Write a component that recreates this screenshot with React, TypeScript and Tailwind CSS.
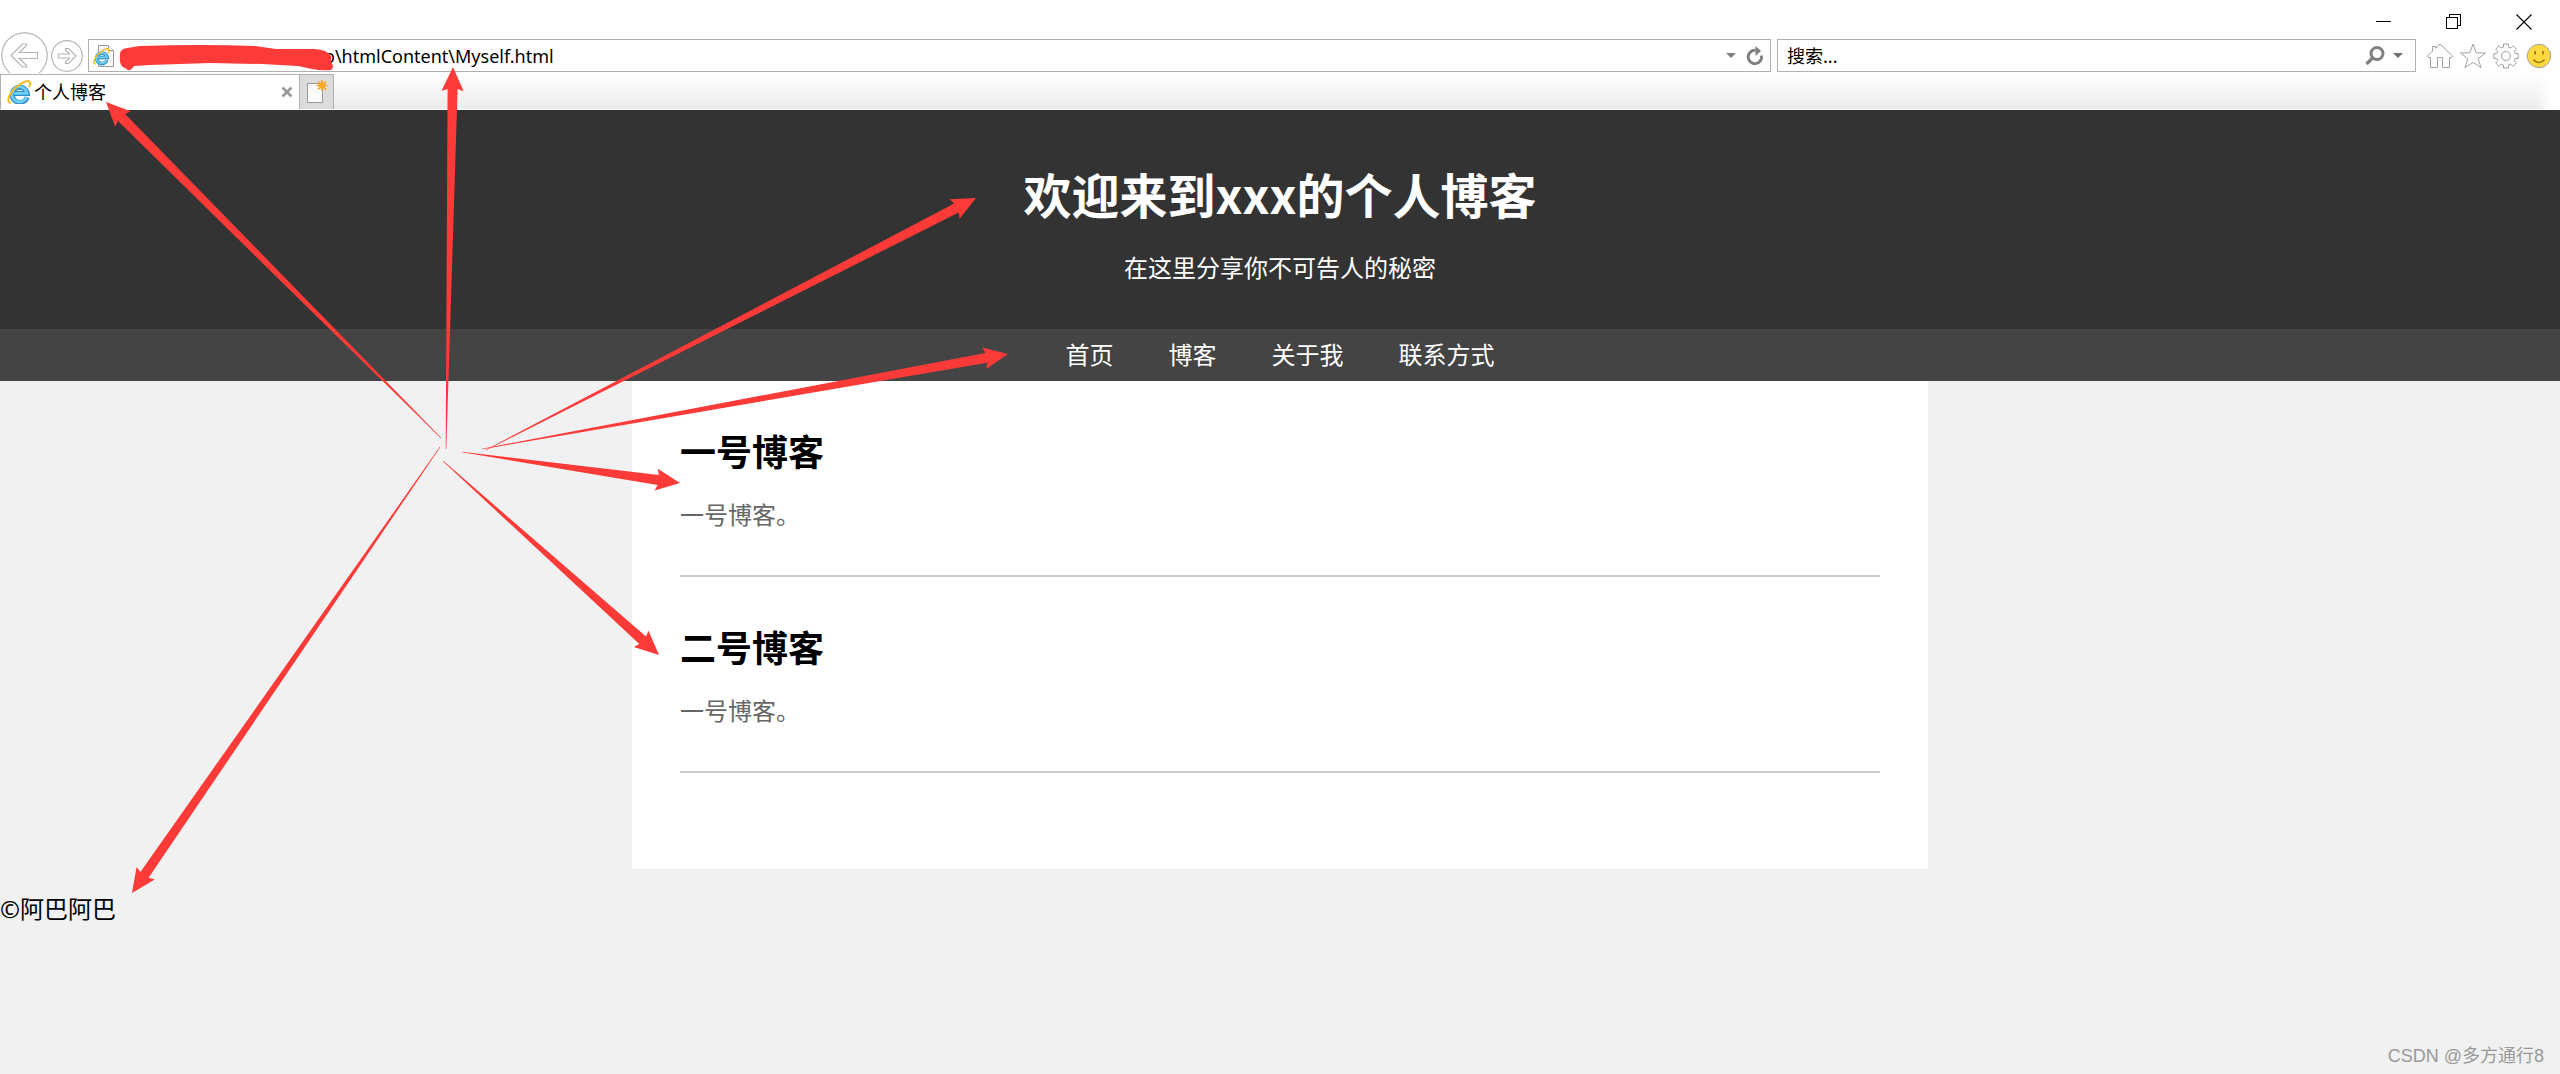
import type { ReactNode } from 'react'

const navItems = ['首页', '博客', '关于我', '联系方式']

const posts = [
  { title: '一号博客', body: '一号博客。' },
  { title: '二号博客', body: '一号博客。' },
]

// 标注箭头:从 tail 到 tip
const arrows = [
  { tail: [441, 438], tip: [106, 102] },
  { tail: [446, 449], tip: [453, 67] },
  { tail: [486, 450], tip: [976, 198] },
  { tail: [482, 449], tip: [1008, 354] },
  { tail: [462, 452], tip: [680, 483] },
  { tail: [443, 461], tip: [659, 655] },
  { tail: [440, 447], tip: [132, 893] },
]

function arrowPoints([x0, y0]: number[], [x1, y1]: number[]): string {
  const len = Math.hypot(x1 - x0, y1 - y0)
  const ux = (x1 - x0) / len
  const uy = (y1 - y0) / len
  const at = (back: number, side: number) =>
    `${(x1 - ux * back - uy * side).toFixed(1)},${(y1 - uy * back + ux * side).toFixed(1)}`
  return [at(0, 0), at(24, 11), at(22, 5), at(len, 0.3), at(len, -0.3), at(22, -5), at(24, -11)].join(' ')
}

function IeMark() {
  return (
    <>
      <path d="M20 17.2A7.6 7.6 0 1 1 20.3 13.6H7" fill="none" stroke="#2b8fc9" strokeWidth="5" />
      <path d="M19.4 17.4A7.6 7.6 0 1 1 20 13.4H7" fill="none" stroke="#6fd0f4" strokeWidth="2.8" />
      <path
        d="M4 22.8C-1 22.6 1.2 14.5 8.6 7.8 15 2 21.6-.6 22.8 2.4c.5 1.3 0 3-1 4.8"
        fill="none"
        stroke="#f7bd22"
        strokeWidth="2"
      />
    </>
  )
}

function IeLogo() {
  return (
    <svg viewBox="0 0 24 24" className="h-6 w-6 shrink-0" aria-hidden="true">
      <IeMark />
    </svg>
  )
}

function PageIcon() {
  return (
    <svg viewBox="0 0 22 22" className="h-[22px] w-[22px] shrink-0" aria-hidden="true">
      <path d="M5.5.5h10l5 5v16h-15z" fill="#f7f7f7" stroke="#9a9a9a" />
      <path d="M15.5.5v5h5" fill="#fff" stroke="#9a9a9a" />
      <g transform="translate(0 3) scale(.7)">
        <IeMark />
      </g>
    </svg>
  )
}

function IconButton({ label, className, children }: { label: string; className?: string; children: ReactNode }) {
  return (
    <button type="button" aria-label={label} className={`shrink-0 ${className ?? ''}`}>
      {children}
    </button>
  )
}

function TitleBar() {
  return (
    <div className="flex h-[39px] items-center justify-end gap-[54px] pt-1 pr-7">
      <IconButton label="最小化">
        <svg viewBox="0 0 16 16" className="h-4 w-4" shapeRendering="crispEdges">
          <path d="M0 7.5h15" stroke="#000" />
        </svg>
      </IconButton>
      <IconButton label="还原">
        <svg viewBox="0 0 16 16" className="h-4 w-4" fill="none" stroke="#000" shapeRendering="crispEdges">
          <path d="M.5 3.5h11v11H.5zM3.5 3.5v-3h11v11h-3" />
        </svg>
      </IconButton>
      <IconButton label="关闭">
        <svg viewBox="0 0 16 16" className="h-4 w-4">
          <path d="M.5.5l15 15M15.5.5l-15 15" stroke="#000" strokeWidth="1.1" />
        </svg>
      </IconButton>
    </div>
  )
}

function AddressRow() {
  return (
    <div className="flex h-[34px] items-start pr-2">
      <div className="flex w-[88px] shrink-0 items-center gap-[3px] pl-px">
        <IconButton label="后退" className="h-[34px] w-[47px]">
          <svg viewBox="0 0 47 41" className="-mt-2 h-[41px] w-[47px]" fill="#fff" stroke="#b4b4b4" strokeWidth="1.2">
            <circle cx="23.5" cy="23.5" r="22.7" />
            <path d="M10 23.5L21.5 12h4v1.5l-7 7h18v6h-18l7 7V35h-4z" />
          </svg>
        </IconButton>
        <IconButton label="前进">
          <svg viewBox="0 0 32 32" className="h-8 w-8" fill="#fff" stroke="#b4b4b4" strokeWidth="1.2">
            <circle cx="16" cy="16" r="15.3" />
            <path d="M25 16l-7.5-7.5h-3V10l4 4h-11v4h11l-4 4v1.5h3z" />
          </svg>
        </IconButton>
      </div>
      <div className="flex h-[33px] flex-1 items-center border border-[#b0b0b0] bg-white pr-1.5 pl-1">
        <PageIcon />
        <input
          aria-label="地址"
          defaultValue="o\htmlContent\Myself.html"
          className="h-full min-w-0 flex-1 pl-[209px] text-[18px] text-black outline-none"
        />
        <IconButton label="显示地址列表" className="mr-2.5">
          <svg viewBox="0 0 10 5" className="h-[5px] w-2.5">
            <path d="M0 0h10L5 5z" fill="#808080" />
          </svg>
        </IconButton>
        <IconButton label="刷新">
          <svg viewBox="0 0 18 20" className="h-5 w-[18px]">
            <path d="M15.4 9.5A6.7 6.7 0 1 1 9.5 4.3" fill="none" stroke="#808080" strokeWidth="3" />
            <path d="M9.5 0l5.5 5-5.5 5z" fill="#808080" />
          </svg>
        </IconButton>
      </div>
      <div className="ml-1.5 flex h-[33px] w-[639px] items-center border border-[#b0b0b0] bg-white pr-3 pl-[9px]">
        <input
          aria-label="搜索"
          placeholder="搜索..."
          className="h-full min-w-0 flex-1 text-[18px] outline-none placeholder:text-black"
        />
        <IconButton label="执行搜索" className="mr-2">
          <svg viewBox="0 0 20 20" className="h-5 w-5" fill="none" stroke="#808080">
            <circle cx="12" cy="7.5" r="6" strokeWidth="3" />
            <path d="M8 11.5L1.5 18" strokeWidth="3.4" />
          </svg>
        </IconButton>
        <IconButton label="搜索选项">
          <svg viewBox="0 0 10 5" className="h-[5px] w-2.5">
            <path d="M0 0h10L5 5z" fill="#707070" />
          </svg>
        </IconButton>
      </div>
      <div className="ml-[11px] flex h-[34px] items-center gap-[7px]">
        <IconButton label="主页">
          <svg viewBox="0 0 26 26" className="h-[26px] w-[26px]" fill="#fff" stroke="#a0a0a0" strokeLinejoin="round">
            <path d="M13 1l12.5 12-1 1.5h-2v10h-7v-10h-5v10h-7v-10h-2l-1-1.5 5-5V3.5h3v1.8z" />
          </svg>
        </IconButton>
        <IconButton label="收藏夹">
          <svg viewBox="0 0 26 26" className="h-[26px] w-[26px]" fill="#fff" stroke="#a0a0a0" strokeLinejoin="round">
            <path d="M13 1l3.2 8.8 9.3.2-7.4 5.7 2.9 9-8-5.3-8 5.3 2.9-9L.5 10l9.3-.2z" />
          </svg>
        </IconButton>
        <IconButton label="工具">
          <svg viewBox="0 0 26 26" className="h-[26px] w-[26px]" fill="#fff" stroke="#a0a0a0" strokeLinejoin="round">
            <path d="M10.5 1h5v3l2.3 1L20 2.8l3.3 3.4-2.1 2.1 1 2.2h3v5h-3l-1 2.2 2.1 2.2-3.3 3.4-2.2-2.2-2.3 1V25h-5v-2.9l-2.3-1L6 23.300l-3.300-3.400 2.100-2.200-1-2.200h-3v-5h3l1-2.200-2.100-2.100L6 2.800 8.200 5l2.300-1z" />
            <circle cx="13" cy="13" r="4.5" />
          </svg>
        </IconButton>
        <IconButton label="反馈">
          <svg viewBox="0 0 26 26" className="h-[26px] w-[26px]">
            <circle cx="13" cy="13" r="11.7" fill="#ffd93f" stroke="#a0a0a0" />
            <path d="M9 8v3.5M17 8v3.5" stroke="#9a7d10" strokeWidth="1.8" />
            <path d="M7.5 16.5c3 4 8 4 11 0" fill="none" stroke="#9a7d10" strokeWidth="1.5" />
          </svg>
        </IconButton>
      </div>
    </div>
  )
}

function TabStrip() {
  return (
    <div className="mt-px flex h-9 border-b border-white bg-linear-to-b from-white to-[#ebebeb]">
      <div className="flex w-[300px] items-center border border-b-0 border-[#b0b0b0] bg-white px-1.5">
        <IeLogo />
        <span className="ml-[3px] flex-1 text-[18px] leading-6 text-black">个人博客</span>
        <IconButton label="关闭选项卡">
          <svg viewBox="0 0 12 12" className="h-3 w-3">
            <path d="M1.5 1.5l9 9M10.5 1.5l-9 9" stroke="#999" strokeWidth="2.6" />
          </svg>
        </IconButton>
      </div>
      <IconButton
        label="新建选项卡"
        className="flex w-[34px] items-center justify-center border-t border-r border-[#b0b0b0] bg-[#dcdcdc]"
      >
        <svg viewBox="0 0 22 24" className="h-6 w-[22px]">
          <path d="M1.5 3.5h15v19h-15z" fill="#fafafa" stroke="#999" />
          <path d="M16 0v11M10.5 5.5h11M12 1.5l8 8M20 1.5l-8 8" stroke="#f5a31a" strokeWidth="1.6" />
          <circle cx="16" cy="5.5" r="3.2" fill="#f9a825" />
        </svg>
      </IconButton>
      <div className="flex-1" />
      <div className="w-6 bg-linear-to-r from-white/0 to-white to-60%" />
    </div>
  )
}

function Annotations() {
  return (
    <svg viewBox="0 0 2560 1074" className="pointer-events-none absolute top-0 left-0 w-full" aria-hidden="true">
      {arrows.map(({ tail, tip }) => (
        <polygon key={tip.join()} points={arrowPoints(tail, tip)} fill="#fc3a38" />
      ))}
      {/* 涂抹掉的本地路径 */}
      <path
        d="M120 54Q120 49 127 48L140 46Q200 44 255 46L276 49 314 49Q328 50 331 56L331 62Q335 67 331 70Q322 71 312 69L298 66 262 64 210 63 150 65 134 66Q131 71 128 70Q125 68 123 67Q119 65 120 54Z"
        fill="#fc3a38"
      />
    </svg>
  )
}

export default function App() {
  return (
    <div className="relative min-h-screen bg-[#f1f1f1] font-['Noto_Sans','Noto_Sans_CJK_SC',sans-serif] text-[24px] leading-8">
      <div className="bg-white">
        <TitleBar />
        <AddressRow />
        <TabStrip />
      </div>

      <header className="bg-[#333] pt-[51px] pb-[45px] text-center text-white">
        <h1 className="font-['Noto_Sans_CJK_SC',sans-serif] text-[48px] leading-[64px] font-bold">
          欢迎来到xxx的个人博客
        </h1>
        <p className="mt-[27px]">在这里分享你不可告人的秘密</p>
      </header>
      <nav className="flex h-[52px] items-center justify-center gap-[55px] bg-[#444] text-white">
        {navItems.map((item) => (
          <a key={item} href="#">
            {item}
          </a>
        ))}
      </nav>

      <main className="mx-auto max-w-[1296px] bg-white p-12">
        {posts.map((post) => (
          <article key={post.title} className="mb-12 border-b-2 border-[#ccc] pb-11">
            <h2 className="text-[36px] leading-[48px] font-bold text-black">{post.title}</h2>
            <p className="mt-[22px] text-[#666]">{post.body}</p>
          </article>
        ))}
      </main>

      <footer className="pt-6 text-black">©阿巴阿巴</footer>

      <div className="absolute right-4 bottom-0.5 font-['Liberation_Sans','Noto_Sans_CJK_SC',sans-serif] text-[18px] text-[#999]">
        CSDN @多方通行8
      </div>
      <Annotations />
    </div>
  )
}
